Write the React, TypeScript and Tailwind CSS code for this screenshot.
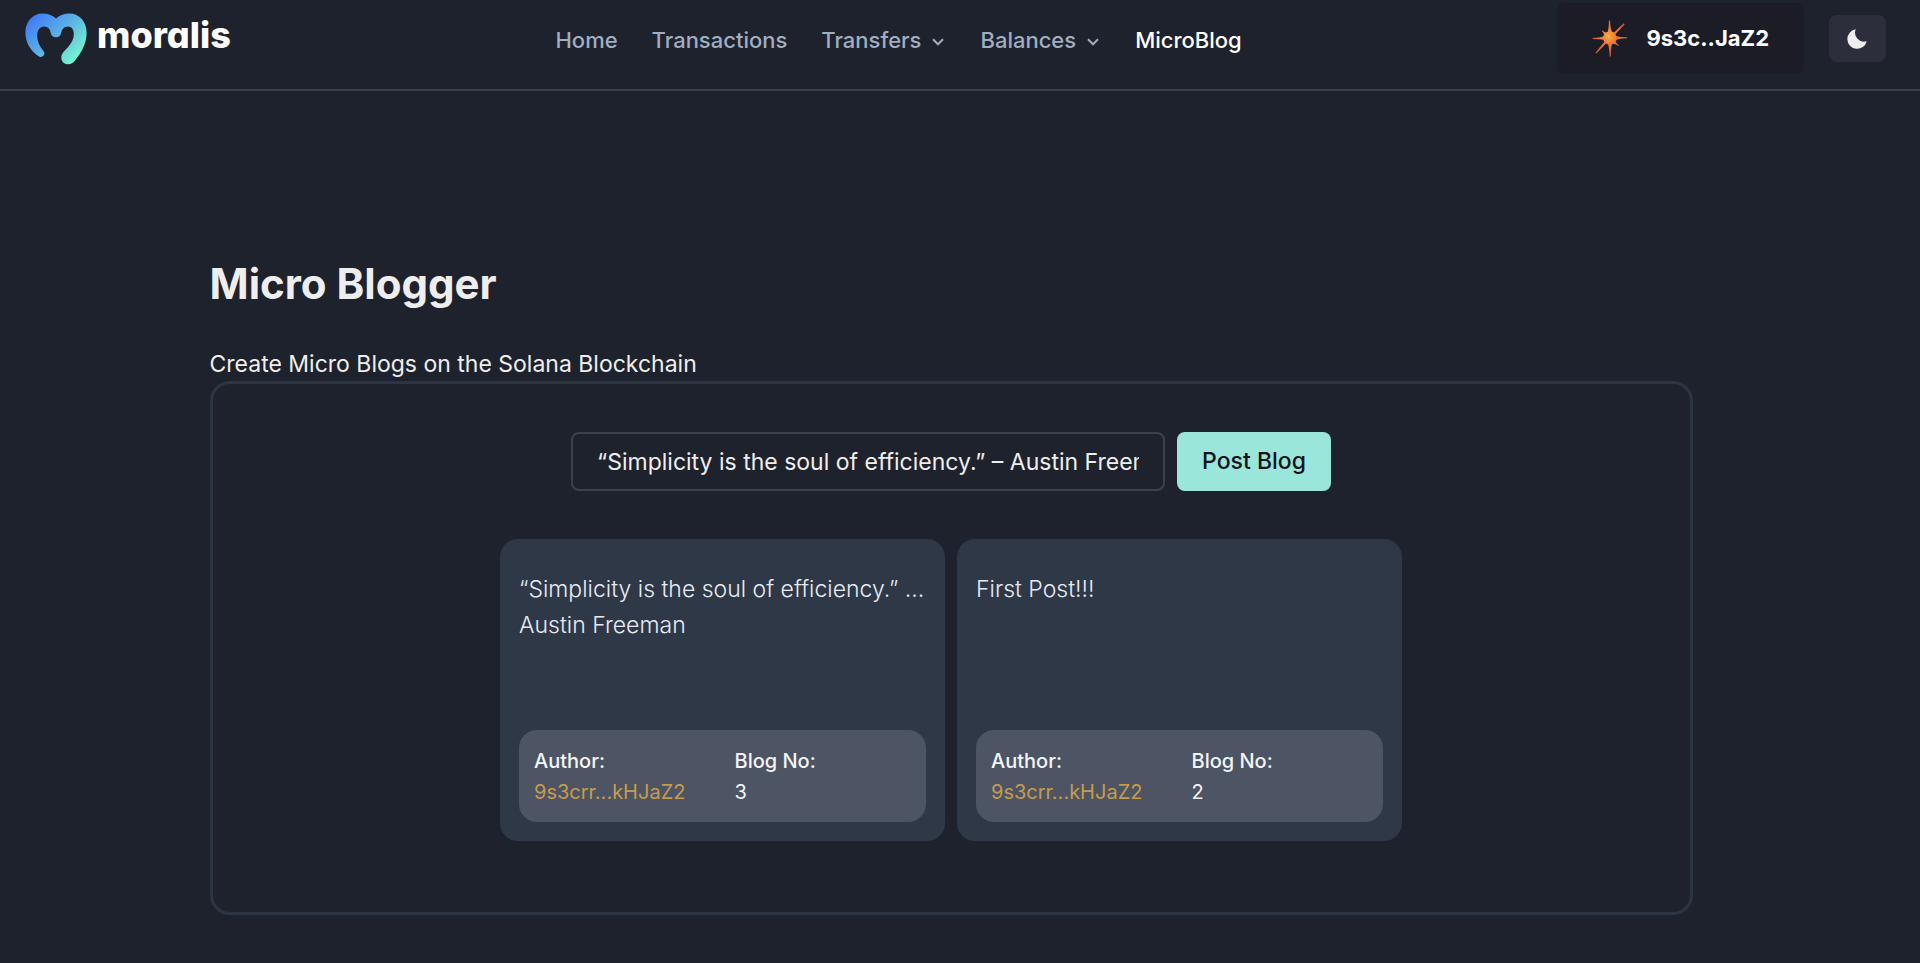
import { useState } from "react";

type Blog = { id: number; lines: string[]; author: string };

const blogs: Blog[] = [
  {
    id: 3,
    lines: ["“Simplicity is the soul of efficiency.” ...", "Austin Freeman"],
    author: "9s3crr...kHJaZ2",
  },
  { id: 2, lines: ["First Post!!!"], author: "9s3crr...kHJaZ2" },
];

function LogoMark() {
  return (
    <svg width="62" height="52" viewBox="0 0 62 52" fill="none" aria-hidden="true">
      <defs>
        <linearGradient id="mark" x1="6" y1="6" x2="48" y2="50" gradientUnits="userSpaceOnUse">
          <stop offset="0" stopColor="#3f7df8" />
          <stop offset="0.5" stopColor="#5cb3e4" />
          <stop offset="1" stopColor="#74f8cc" />
        </linearGradient>
      </defs>
      <path
        d="M31 5.6C27.4 2.2 22.6 .6 17.500 .6C7.6 .6 .4 8.8 .4 19.5C.4 29.5 5.5 37.5 13.2 43C15 44.3 17.3 44.2 18.6 42.6C19.9 41 19.5 39 18 37.4C14.3 33.2 12.2 28.5 12.2 22.6C12.2 17 15 13.4 19 13.4C23 13.4 25.2 16.3 25.6 19.6C26 22.6 28 24.3 31 24.3C34 24.3 35.8 22.6 36.3 19.6C36.8 16.3 39.2 13.4 43 13.4C46.6 13.4 48.8 16.4 48.8 21.2C48.8 27.5 44.5 33 39.8 37.5C37.4 39.8 36.3 42 36.3 44.4C36.3 48.4 39.2 51.2 43.1 51.2C46 51.2 48.2 49.8 50.2 47.2C56.5 39.6 61.6 30.5 61.6 19.5C61.6 8.8 54.4 .6 44.5 .6C39.4 .6 34.6 2.2 31 5.6Z"
        fill="url(#mark)"
      />
    </svg>
  );
}

function Chevron() {
  return (
    <svg width="16" height="8" viewBox="0 0 16 8" fill="none" stroke="currentColor" strokeWidth="2" className="mt-1" aria-hidden="true">
      <path d="M3 1.3L8 6.3L13 1.3" />
    </svg>
  );
}

function Star() {
  return (
    <svg width="36" height="37" viewBox="0 0 36 37" aria-hidden="true">
      <defs>
        <radialGradient id="star" cx="16.500" cy="16" r="18" gradientUnits="userSpaceOnUse">
          <stop offset="0" stopColor="#fbb040" />
          <stop offset="0.4" stopColor="#f27b37" />
          <stop offset="1" stopColor="#cf5a40" />
        </radialGradient>
      </defs>
      <path
        d="M16.900 .600H18.100Q18.300 8 19.800 11.600L22.200 12.600Q27 7.500 31.800 3.300L32.700 4.200Q28 9.500 23.500 14L24.500 16.300Q28 17.100 35.200 17.200V18.300Q28 18.700 24.500 19.800L23.600 21.800Q24.800 23.800 26.900 25.300L26.500 25.900Q24 24.300 21.700 23.700L19.900 24.500Q19 28 18.800 36.400H17.600Q17.300 28 16.100 24.600L13.800 23.500Q9 29 4.300 33.600L3.400 32.700Q8 27 12.300 22L11.300 19.800Q8 19 .600 19V17.900Q8 17.600 11.200 16.400L12.100 14.300Q11.300 12.500 9.900 11L10.500 10.400Q12 11.800 13.900 12.500L15.900 11.600Q16.700 8 16.900 .600Z"
        fill="url(#star)"
      />
    </svg>
  );
}

function Moon() {
  return (
    <svg width="20" height="20" viewBox="0 0 20 20" fill="#eeeeee" aria-hidden="true">
      <path d="M8.8 .3A9.8 9.8 0 1 0 19.7 12.2A8.9 8.9 0 0 1 8.8 .3Z" />
    </svg>
  );
}

function Header() {
  return (
    <header className="flex h-[91px] items-start justify-between border-b-2 border-[#39414c] pr-[34px] pl-[25px]">
      <a href="#home" className="flex items-start gap-2.5 pt-[13px] pr-[9px]" aria-label="moralis">
        <LogoMark />
        <span className="text-[36px] leading-[44px] font-extrabold text-white [font-feature-settings:'cv11']">moralis</span>
      </a>
      <nav className="flex items-center gap-[34px] pt-6 text-[22px] leading-8 font-medium text-[#a0aec0]">
        <a href="#home">Home</a>
        <a href="#transactions">Transactions</a>
        <button type="button" className="flex items-center gap-[9px]">
          Transfers <Chevron />
        </button>
        <button type="button" className="flex items-center gap-[9px]">
          Balances <Chevron />
        </button>
        <a href="#microblog" className="text-white" aria-current="page">
          MicroBlog
        </a>
      </nav>
      <div className="flex items-start justify-end gap-[25px]">
        <button type="button" className="mt-[3px] flex h-[71px] items-center gap-[18px] rounded-lg bg-[#1b1c26] px-[35px] text-[22px] font-bold text-white">
          <Star />
          9s3c..JaZ2
        </button>
        <button type="button" aria-label="Toggle theme" className="mt-[15px] flex h-[47px] w-[57px] items-center justify-center rounded-lg bg-[#2c2f3b]">
          <Moon />
        </button>
      </div>
    </header>
  );
}

function BlogCard({ blog }: { blog: Blog }) {
  return (
    <article className="flex min-h-[302px] w-[445px] flex-col justify-between rounded-[18px] bg-[#2f3846] px-[19px] pt-8 pb-[19px]">
      <p className="text-[23px] leading-9 font-light text-[#e6ebf5]">
        {blog.lines.map((line) => (
          <span key={line} className="block whitespace-nowrap">
            {line}
          </span>
        ))}
      </p>
      <dl className="grid grid-cols-2 gap-x-2 rounded-[18px] bg-[#4d5464] px-[15px] pt-4 pb-[14px] text-[20px] leading-[31px] text-[#f2f5fa]">
        <div>
          <dt className="font-medium">Author:</dt>
          <dd className="text-[#c69c4b]">{blog.author}</dd>
        </div>
        <div className="pl-2">
          <dt className="font-medium">Blog No:</dt>
          <dd>{blog.id}</dd>
        </div>
      </dl>
    </article>
  );
}

export default function App() {
  const [text, setText] = useState("“Simplicity is the soul of efficiency.” – Austin Freeman");
  return (
    <div className="min-h-screen bg-[#1e222c] font-['Inter',sans-serif] text-[#eeeeee]">
      <Header />
      <main className="pr-[18px] pb-12">
        <div className="mx-auto max-w-[1483px] pt-[165px]">
          <h1 className="text-[42px] leading-[56px] font-bold">Micro Blogger</h1>
          <p className="mt-9 text-[23px] leading-[33px]">Create Micro Blogs on the Solana Blockchain</p>
          <section className="rounded-[20px] border-3 border-[#2c3643] px-6 pt-12 pb-[71px]">
            <form className="flex justify-center gap-3" onSubmit={(e) => e.preventDefault()}>
              <input
                type="text"
                aria-label="Blog text"
                value={text}
                onChange={(e) => setText(e.target.value)}
                className="h-[59px] w-[594px] rounded-lg border-2 border-[#3c424d] bg-transparent px-6 text-[23px] outline-none"
              />
              <button type="submit" className="h-[59px] rounded-lg bg-[#9ae6da] px-[25px] text-[23px] font-medium text-[#10151c]">
                Post Blog
              </button>
            </form>
            <div className="mt-12 flex flex-wrap justify-center gap-3">
              {blogs.map((blog) => (
                <BlogCard key={blog.id} blog={blog} />
              ))}
            </div>
          </section>
        </div>
      </main>
    </div>
  );
}
